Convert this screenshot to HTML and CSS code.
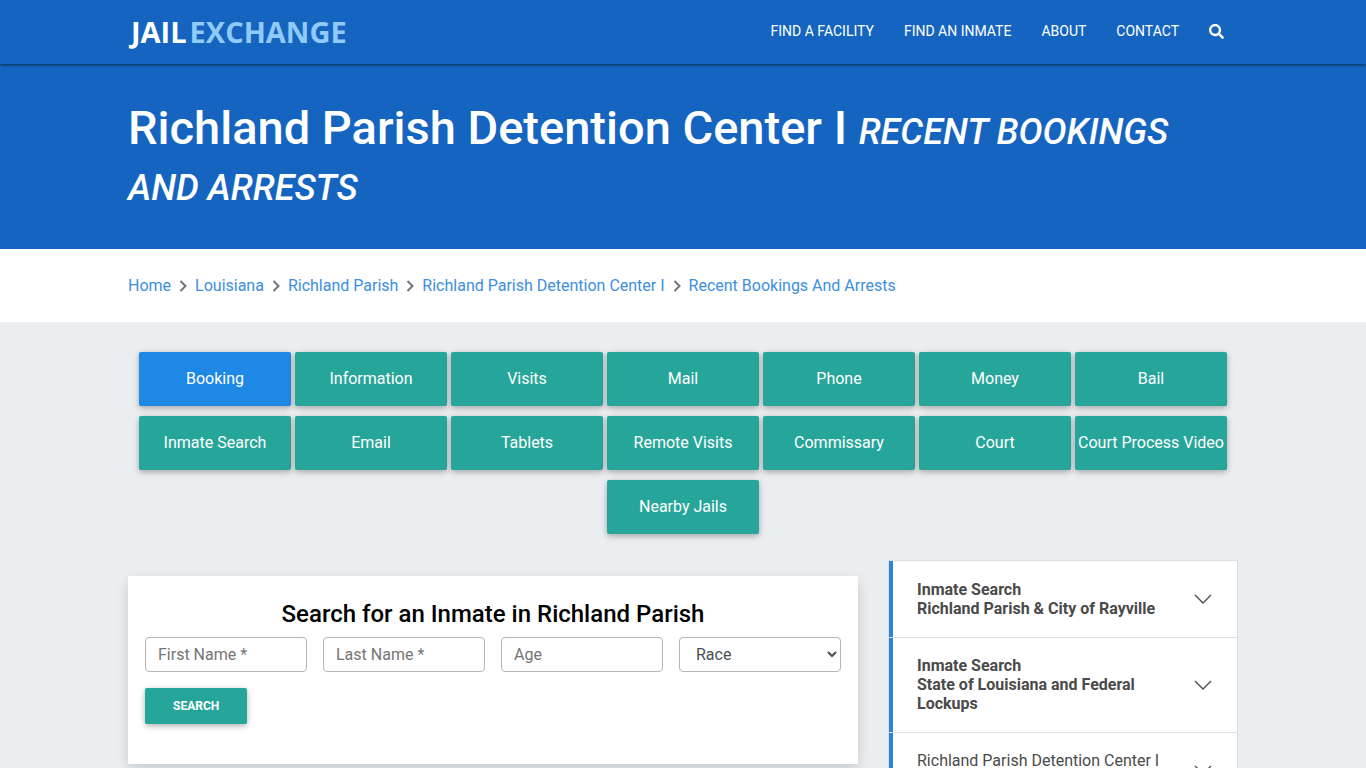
FILE: index.html
```html
<!DOCTYPE html>
<html lang="en">
<head>
  <meta charset="UTF-8" />
  <meta name="viewport" content="width=device-width, initial-scale=1.0"/>
  <title>Richland Parish Detention Center I Recent Bookings and Arrests</title>
  <link rel="stylesheet" href="styles.css">
</head>
<body>

  <header class="navbar">
    <div class="container navbar-inner">
      <a class="logo" href="#">JAIL<span class="logo-light">EXCHANGE</span></a>
      <nav class="nav-links">
        <a href="#">Find a Facility</a>
        <a href="#">Find an Inmate</a>
        <a href="#">About</a>
        <a href="#">Contact</a>
        <a class="nav-search" href="#" aria-label="Search">
          <svg viewBox="0 0 512 512" width="15" height="15"><path fill="currentColor" d="M505 442.700 405.300 343c-4.500-4.500-10.600-7-17-7H372c27.600-35.300 44-79.700 44-128C416 93.100 322.900 0 208 0S0 93.100 0 208s93.100 208 208 208c48.300 0 92.700-16.400 128-44v16.300c0 6.400 2.500 12.500 7 17l99.700 99.700c9.400 9.400 24.600 9.400 33.900 0l28.300-28.300c9.400-9.400 9.400-24.600.1-34zM208 336c-70.700 0-128-57.200-128-128 0-70.700 57.200-128 128-128 70.700 0 128 57.200 128 128 0 70.700-57.200 128-128 128z"/></svg>
        </a>
      </nav>
    </div>
  </header>

  <div class="hero">
    <div class="container">
      <h1>Richland Parish Detention Center I <em>Recent Bookings and Arrests</em></h1>
    </div>
  </div>

  <nav class="breadcrumb-bar" aria-label="Breadcrumb">
    <ol class="container breadcrumb">
      <li><a href="#">Home</a></li>
      <li><svg class="crumb-arrow" viewBox="0 0 8 12"><path d="M1.500 1 6.500 6l-5 5"/></svg><a href="#">Louisiana</a></li>
      <li><svg class="crumb-arrow" viewBox="0 0 8 12"><path d="M1.500 1 6.500 6l-5 5"/></svg><a href="#">Richland Parish</a></li>
      <li><svg class="crumb-arrow" viewBox="0 0 8 12"><path d="M1.500 1 6.500 6l-5 5"/></svg><a href="#">Richland Parish Detention Center I</a></li>
      <li><svg class="crumb-arrow" viewBox="0 0 8 12"><path d="M1.500 1 6.500 6l-5 5"/></svg><a href="#">Recent Bookings And Arrests</a></li>
    </ol>
  </nav>

  <main class="container">
    <nav class="tabs" aria-label="Facility pages">
      <a class="tab active" href="#">Booking</a>
      <a class="tab" href="#">Information</a>
      <a class="tab" href="#">Visits</a>
      <a class="tab" href="#">Mail</a>
      <a class="tab" href="#">Phone</a>
      <a class="tab" href="#">Money</a>
      <a class="tab" href="#">Bail</a>
      <a class="tab" href="#">Inmate Search</a>
      <a class="tab" href="#">Email</a>
      <a class="tab" href="#">Tablets</a>
      <a class="tab" href="#">Remote Visits</a>
      <a class="tab" href="#">Commissary</a>
      <a class="tab" href="#">Court</a>
      <a class="tab" href="#">Court Process Video</a>
      <a class="tab" href="#">Nearby Jails</a>
    </nav>

    <div class="columns">
      <form class="search-card">
        <h2>Search for an Inmate in Richland Parish</h2>
        <div class="fields">
          <input type="text" aria-label="First Name" placeholder="First Name *">
          <input type="text" aria-label="Last Name" placeholder="Last Name *">
          <input type="text" aria-label="Age" placeholder="Age">
          <select aria-label="Race">
            <option>Race</option>
          </select>
        </div>
        <button class="search-btn" type="button">Search</button>
      </form>

      <aside class="side-menu">
        <button class="side-item strong" type="button">
          <span>Inmate Search<br>Richland Parish &amp; City of Rayville</span>
          <svg class="chevron" viewBox="0 0 18 10"><path d="m1 1 8 8 8-8"/></svg>
        </button>
        <button class="side-item strong" type="button">
          <span>Inmate Search<br>State of Louisiana and Federal Lockups</span>
          <svg class="chevron" viewBox="0 0 18 10"><path d="m1 1 8 8 8-8"/></svg>
        </button>
        <button class="side-item" type="button">
          <span>Richland Parish Detention Center I<br>&nbsp;</span>
          <svg class="chevron" viewBox="0 0 18 10"><path d="m1 1 8 8 8-8"/></svg>
        </button>
      </aside>
    </div>
  </main>

</body>
</html>
```

FILE: styles.css
```css
* {
  box-sizing: border-box;
}

body {
  margin: 0;
  font-family: Roboto, sans-serif;
  font-size: 16px;
  line-height: 24px;
  background-color: #eaeef1;
  color: #4a4a4a;
}

a {
  text-decoration: none;
}

.container {
  width: 100%;
  max-width: 1140px;
  margin: 0 auto;
  padding: 0 15px;
}

/* top bar */
.navbar {
  position: relative;
  background-color: #1565c0;
  box-shadow: 0 1px 3px rgba(0, 0, 0, 0.6);
}

.navbar-inner {
  display: flex;
  justify-content: space-between;
  align-items: center;
  min-height: 64px;
}

.logo {
  padding-left: 3px;
  font-family: "Open Sans", sans-serif;
  font-size: 29px;
  font-weight: 700;
  line-height: 32px;
  color: #fff;
}

.logo-light {
  margin-left: 3px;
  color: #90caf9;
}

.nav-links {
  display: flex;
  align-items: center;
  gap: 30px;
  padding: 0 14px 2px 0;
}

.nav-links a {
  font-size: 14px;
  color: #fff;
  text-transform: uppercase;
}

.nav-search svg {
  display: block;
}

/* page title */
.hero {
  padding: 36px 0 37px;
  background-color: #1565c0;
}

h1 {
  margin: 0;
  font-size: 47px;
  font-weight: 500;
  line-height: 56px;
  color: #fff;
}

h1 em {
  font-size: 36px;
  line-height: 36px;
  text-transform: uppercase;
}

/* breadcrumb */
.breadcrumb-bar {
  padding: 25px 0 24px;
  background-color: #fff;
}

.breadcrumb {
  display: flex;
  flex-wrap: wrap;
  list-style: none;
}

.breadcrumb li {
  display: flex;
  align-items: center;
}

.breadcrumb a {
  color: #3d8ee0;
}

.crumb-arrow {
  width: 8px;
  height: 12px;
  margin: 0 8px;
  fill: none;
  stroke: #6c757d;
  stroke-width: 2;
}

/* page tabs */
.tabs {
  display: flex;
  flex-wrap: wrap;
  justify-content: center;
  gap: 10px 4px;
  padding: 30px 0 26px;
}

.tab {
  width: 152px;
  padding: 15px 0;
  border-radius: 2px;
  background-color: #26a69a;
  box-shadow: 0 2px 5px rgba(0, 0, 0, 0.2), 0 2px 8px rgba(0, 0, 0, 0.12);
  color: #fff;
  text-align: center;
  white-space: nowrap;
}

.tab.active {
  background-color: #1e88e5;
}

.columns {
  display: grid;
  grid-template-columns: 73fr 35fr;
  align-items: start;
  gap: 30px;
}

/* inmate search */
.search-card {
  margin-top: 16px;
  padding: 23px 17px 40px;
  background-color: #fff;
  box-shadow: 0 5px 11px rgba(0, 0, 0, 0.1), 0 4px 15px rgba(0, 0, 0, 0.05);
}

h2 {
  margin: 0 0 8px;
  font-size: 24px;
  font-weight: 500;
  line-height: 30px;
  text-align: center;
  color: #000;
}

.fields {
  display: grid;
  grid-template-columns: repeat(4, 1fr);
  gap: 16px;
}

.fields input,
.fields select {
  width: 100%;
  height: 35px;
  padding: 0 12px;
  border: 1px solid #b5b5b5;
  border-radius: 4px;
  background-color: #fff;
  font: inherit;
  color: #495057;
}

.fields select {
  padding: 0 0 0 12px;
}

.fields input::placeholder {
  color: #757575;
}

.search-btn {
  margin-top: 16px;
  padding: 9px 28px;
  border: none;
  border-radius: 2px;
  background-color: #26a69a;
  box-shadow: 0 2px 5px rgba(0, 0, 0, 0.2), 0 2px 8px rgba(0, 0, 0, 0.12);
  font-family: inherit;
  font-size: 12px;
  font-weight: 700;
  line-height: 18px;
  color: #fff;
  text-transform: uppercase;
  cursor: pointer;
}

/* side menu */
.side-menu {
  border: 1px solid #dcdfe1;
  background-color: #dcdfe1;
}

.side-item {
  display: flex;
  justify-content: space-between;
  align-items: center;
  width: 100%;
  padding: 19px 25px 19px 24px;
  border: none;
  border-left: 4px solid #2b84d8;
  background-color: #fff;
  font-family: inherit;
  font-size: 16px;
  line-height: 19px;
  color: #4a4a4a;
  text-align: left;
  cursor: pointer;
}

.side-item + .side-item {
  margin-top: 1px;
  padding-top: 18px;
}

.side-item.strong {
  font-weight: 700;
}

.chevron {
  flex: none;
  width: 18px;
  height: 10px;
  margin-left: 24px;
  fill: none;
  stroke: #4a4a4a;
  stroke-width: 1.3;
}
```
